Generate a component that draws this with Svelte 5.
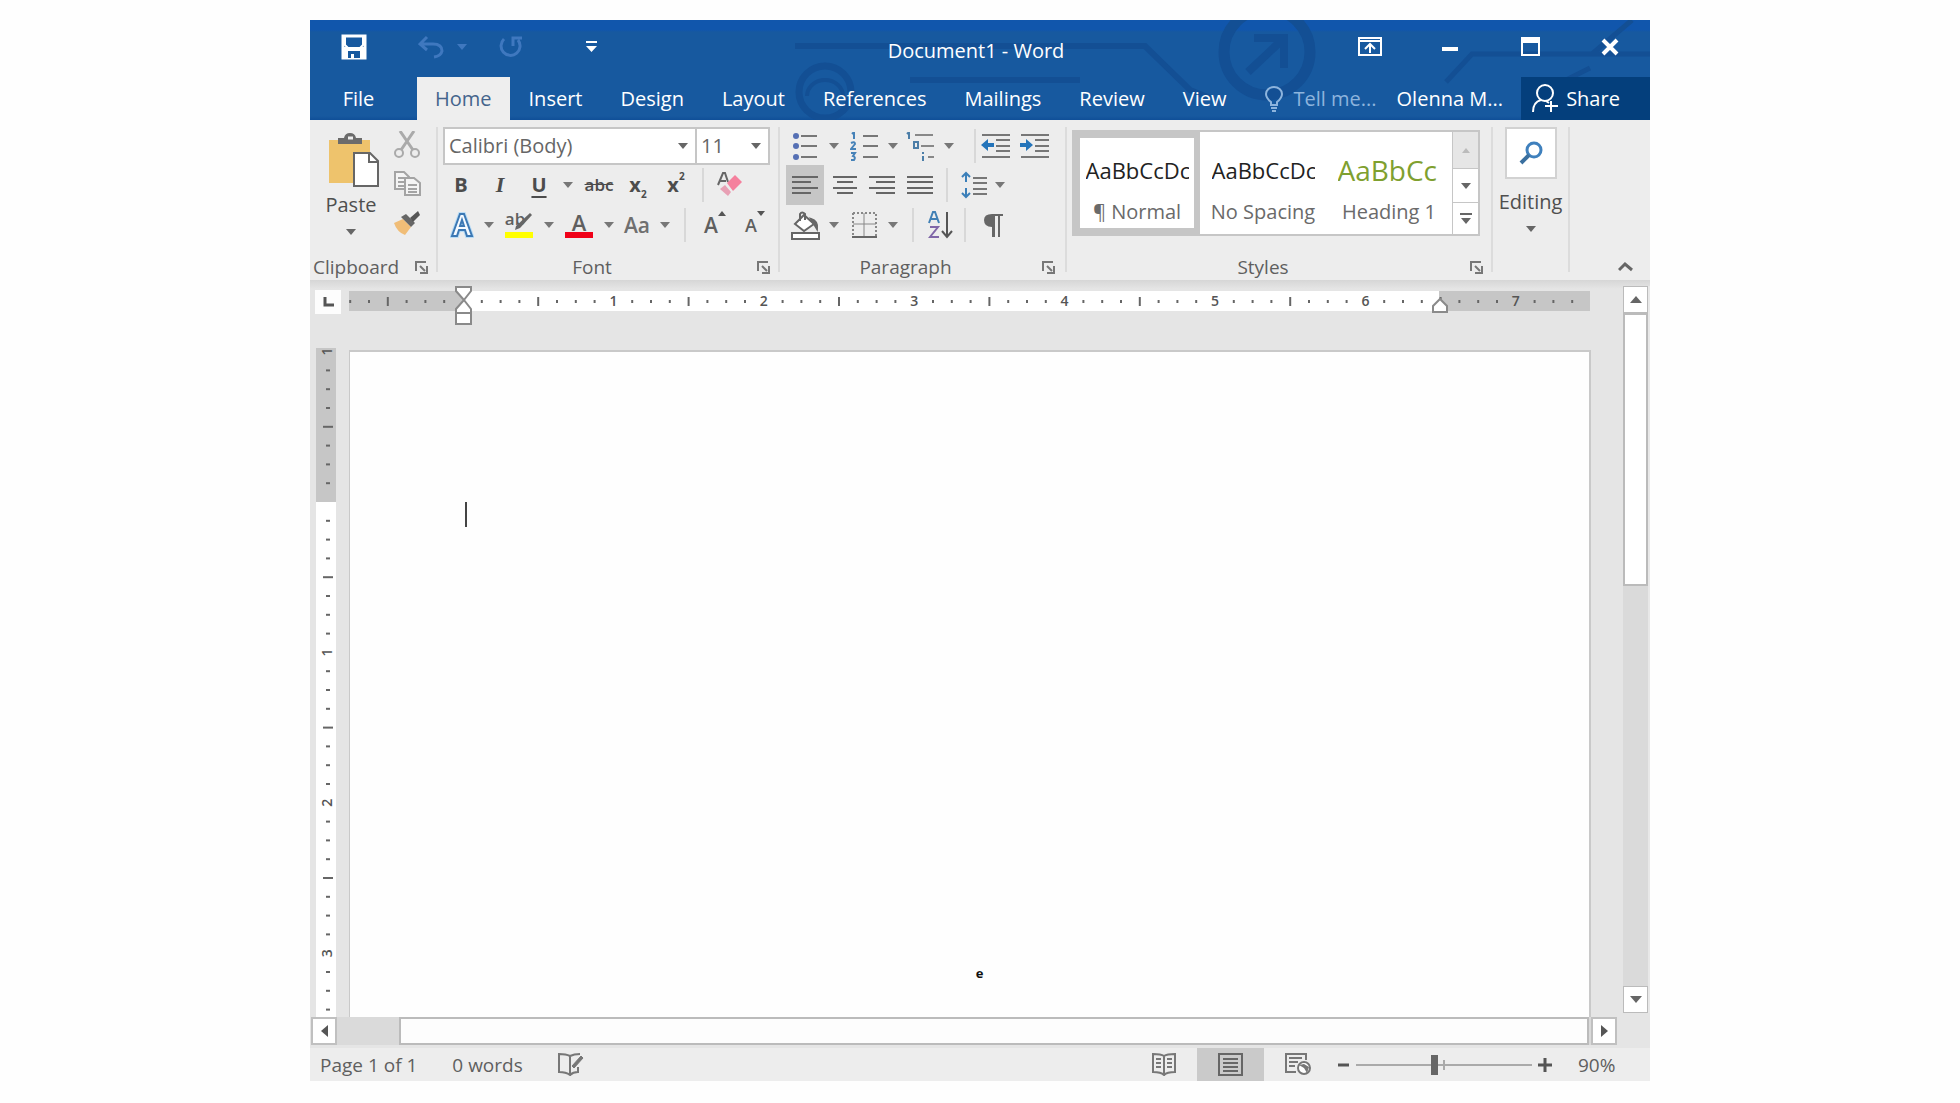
<script>
  const tabs = ['Home', 'Insert', 'Design', 'Layout', 'References', 'Mailings', 'Review', 'View'];
  let activeTab = $state('Home');
  let zoom = $state(90);

  // Ruler marks: eight divisions to the inch, measured from the margin.
  const STEP = 18.8;
  function marks(from, to, origin) {
    const list = [];
    for (let i = from; i <= to; i++) {
      const kind = i % 8 === 0 ? 'number' : i % 4 === 0 ? 'half' : 'dot';
      list.push({ at: origin + i * STEP, kind, label: Math.abs(i / 8) });
    }
    return list.filter((m) => m.label !== 0);
  }
  const across = marks(-6, 59, 114);
  const down = marks(-8, 27, 154);
</script>

{#snippet caret()}
  <svg class="caret" width="10" height="6" viewBox="0 0 10 6" aria-hidden="true"><path d="M0 0H10L5 6Z" fill="currentColor" /></svg>
{/snippet}

{#snippet launcher(name)}
  <button class="launcher" aria-label={name}>
    <svg width="13" height="13" viewBox="0 0 13 13" fill="none" stroke="#777" stroke-width="2"><path d="M1 10V1H11M5 5L10 10M12 5V12H5" /></svg>
  </button>
{/snippet}

{#snippet menu(name)}
  <button class="drop" aria-label={name}>{@render caret()}</button>
{/snippet}

<main class="window">
  <header>
    <svg class="circuit" viewBox="0 0 1340 100" preserveAspectRatio="xMaxYMin slice" fill="none" stroke="#134f94" stroke-width="6" aria-hidden="true">
      <path d="M485 26H835L880 70L900 78" />
      <path d="M600 60H770" />
      <circle cx="515" cy="72" r="26" stroke-width="7" />
      <path d="M497 76A18 16 0 0 1 533 76" stroke-width="4" />
      <circle cx="957" cy="32" r="43" stroke-width="11" />
      <path d="M938 52L972 20M944 18H974V48" stroke-width="8" />
      <path d="M1136 62L1162 34H1340M1282 34L1322 0M1256 60L1280 48" stroke-width="5" />
    </svg>
    <div class="titlebar">
      <div class="quick">
        <button class="save" aria-label="Save">
          <svg width="26" height="26" viewBox="0 0 26 26"><path d="M2 2H24V24H2Z" fill="none" stroke="#fff" stroke-width="3" /><path d="M4 3V11L7 14H19L22 11V3" stroke="#fff" stroke-width="2" fill="none" /><path d="M3 13H23V24H3Z" fill="#fff" /><path d="M7 17H19V24H13V20H10V24H7Z" fill="#17599f" /></svg>
        </button>
        <button class="undo" aria-label="Undo">
          <svg width="26" height="24" viewBox="0 0 26 24" fill="none" stroke="#3f78bf" stroke-width="3"><path d="M9 2L2 9L9 15M3 9H15Q24 9 24 16Q23 21 16 22" /></svg>
        </button>
        <button class="faint" aria-label="Undo list">{@render caret()}</button>
        <button class="redo" aria-label="Repeat">
          <svg width="24" height="24" viewBox="0 0 24 24" fill="none" stroke="#3f78bf" stroke-width="3"><path d="M5 4A9.5 9.5 0 1 0 19 5M14 11V3H23" /></svg>
        </button>
        <button class="customize" aria-label="Customize Quick Access Toolbar">
          <svg width="11" height="12" viewBox="0 0 11 12" fill="#fff"><path d="M0 0H11V2H0ZM0 5H11L5.500 11Z" /></svg>
        </button>
      </div>
      <h1>Document1 - Word</h1>
      <div class="controls">
        <button aria-label="Ribbon Display Options">
          <svg width="24" height="19" viewBox="0 0 24 19" fill="none" stroke="#fff" stroke-width="2"><path d="M1 1H23V18H1ZM1 4H23M12 16V8M7 12L12 7L17 12" /></svg>
        </button>
        <button aria-label="Minimize"><svg width="16" height="19" viewBox="0 0 16 19"><path d="M0 10H16V14H0Z" fill="#fff" /></svg></button>
        <button aria-label="Maximize"><svg width="19" height="19" viewBox="0 0 19 19"><path d="M1 1H18V18H1Z" fill="none" stroke="#fff" stroke-width="2" /><path d="M0 0H19V6H0Z" fill="#fff" /></svg></button>
        <button aria-label="Close"><svg width="18" height="18" viewBox="0 0 18 18"><path d="M2 2L16 16M16 2L2 16" stroke="#fff" stroke-width="4" /></svg></button>
      </div>
    </div>
    <nav>
      <button class="file">File</button>
      {#each tabs as tab}
        <button class="tab" class:active={tab === activeTab} onclick={() => (activeTab = tab)}>{tab}</button>
      {/each}
      <button class="tellme">
        <svg width="18" height="26" viewBox="0 0 18 26" fill="none" stroke="#8db4dd" stroke-width="2"><path d="M6 19V16Q1 12 1 8A8 7 0 0 1 17 8Q17 12 12 16V19ZM6 22H12M7 25H11" /></svg>
        Tell me...
      </button>
      <button class="user">Olenna M...</button>
      <button class="share">
        <svg width="27" height="29" viewBox="0 0 27 29" fill="none" stroke="#fff" stroke-width="2"><circle cx="14" cy="9" r="8" /><path d="M2 28Q2 18 10 16M15 17L18 19M20 17V28M14 22H27" /></svg>
        Share
      </button>
    </nav>
  </header>

  <section class="ribbon" aria-label="Home ribbon">
    <div class="group clipboard">
      <div class="clip-body">
        <button class="paste">
          <svg width="52" height="54" viewBox="0 0 52 54"><path d="M1 7H42V50H1Z" fill="#eec36c" /><path d="M10 11V5H16Q17 0 22 0Q27 0 28 5H34V11Z" fill="#6b6b6b" /><path d="M20 5H25" stroke="#eee" stroke-width="3" /><path d="M26 20H42L50 28V53H26Z" fill="#fff" stroke="#666" stroke-width="2" /><path d="M41 20V29H50" fill="none" stroke="#666" stroke-width="2" /></svg>
          <span>Paste</span>
          {@render caret()}
        </button>
        <div class="clip-tools">
          <button aria-label="Cut"><svg width="26" height="28" viewBox="0 0 26 28" fill="none" stroke="#aaa" stroke-width="2"><path d="M6 0L19 19M20 0L7 19" stroke-width="3" /><circle cx="5" cy="22" r="4" /><circle cx="21" cy="22" r="4" /></svg></button>
          <button aria-label="Copy"><svg width="27" height="25" viewBox="0 0 27 25" fill="#f4f4f4" stroke="#a4a4a4" stroke-width="2"><path d="M1 1H10L15 6V18H1ZM4 7H11M4 11H11M4 15H11" /><path d="M11 7H20L26 12V24H11ZM14 14H23M14 18H23M14 21H23" /></svg></button>
          <button aria-label="Format Painter"><svg width="28" height="26" viewBox="0 0 28 26"><path d="M1 13L10 9L18 17L12 25Q4 22 1 13Z" fill="#f0bd77" /><path d="M8 7L13 4L22 13L18 17Z" fill="#666" /><path d="M17 8L25 1L27 5L20 12Z" fill="#555" /></svg></button>
        </div>
      </div>
      <footer><span>Clipboard</span>{@render launcher('Clipboard settings')}</footer>
    </div>

    <div class="group font">
      <div class="combos">
        <label class="combo family"><select aria-label="Font"><option>Calibri (Body)</option></select>{@render caret()}</label>
        <label class="combo size"><select aria-label="Font size"><option>11</option></select>{@render caret()}</label>
      </div>
      <div class="row font-a">
        <button class="bold">B</button>
        <button class="italic">I</button>
        <button class="underline">U</button>
        {@render menu('Underline style')}
        <button class="strike">abc</button>
        <button class="script">x<sub>2</sub></button>
        <button class="script">x<sup>2</sup></button>
        <i class="rule"></i>
        <button aria-label="Clear formatting"><svg width="26" height="26" viewBox="0 0 26 26"><path d="M1 13L6 1H8L11 10M3 9H9" fill="none" stroke="#666" stroke-width="2" /><path d="M10 11L18 3L25 10L16 19Z" fill="#f5809d" /><path d="M8 13L14 20L11 24L3 17Z" fill="#e8a0b4" /></svg></button>
      </div>
      <div class="row font-b">
        <button aria-label="Text effects"><svg width="24" height="26" viewBox="0 0 24 26" fill="none"><path d="M2 24L10 2H14L22 24H17L15 18H9L7 24ZM10 14H14L12 8Z" stroke="#b9dcf5" stroke-width="4" /><path d="M2 24L10 2H14L22 24H17L15 18H9L7 24ZM10 14H14L12 8Z" fill="#f5faff" stroke="#3c78b4" stroke-width="2" /></svg></button>
        {@render menu('Text effect options')}
        <button class="highlight" aria-label="Text highlight colour"><span>ab</span><svg width="28" height="28" viewBox="0 0 28 28"><path d="M25 2L27 4L15 17L10 19L11 15Z" fill="#666" /><path d="M0 21H28V27H0Z" fill="#ff0" /></svg></button>
        {@render menu('Highlight colours')}
        <button class="colour" aria-label="Font colour">A</button>
        {@render menu('Font colours')}
        <button class="case">Aa</button>
        {@render menu('Change case')}
        <i class="rule"></i>
        <button class="grow" aria-label="Grow font">A<svg width="8" height="5" viewBox="0 0 8 5"><path d="M4 0L8 5H0Z" fill="#555" /></svg></button>
        <button class="grow" aria-label="Shrink font"><small>A</small><svg width="8" height="5" viewBox="0 0 8 5"><path d="M0 0H8L4 5Z" fill="#555" /></svg></button>
      </div>
      <footer><span>Font</span>{@render launcher('Font settings')}</footer>
    </div>

    <div class="group paragraph">
      <div class="row para-a">
        <button aria-label="Bullets"><svg width="24" height="27" viewBox="0 0 24 27"><path d="M8 3H24M8 13H24M8 24H24" stroke="#777" stroke-width="2" /><g fill="#5570b4"><circle cx="3" cy="3" r="3" /><circle cx="3" cy="13" r="3" /><circle cx="3" cy="24" r="3" /></g></svg></button>
        {@render menu('Bullet library')}
        <button aria-label="Numbering"><svg width="28" height="29" viewBox="0 0 28 29"><path d="M13 4H28M13 14H28M13 25H28" stroke="#777" stroke-width="2" /><path d="M2 2L4 0V7M1 11Q5 9 5 12L1 17H6M1 21H5L3 24Q6 25 4 28H1" fill="none" stroke="#4682b8" stroke-width="2" /></svg></button>
        {@render menu('Numbering library')}
        <button aria-label="Multilevel list"><svg width="30" height="29" viewBox="0 0 30 29"><path d="M9 3H27M15 14H28M22 25H28" stroke="#888" stroke-width="2" /><path d="M1 2L3 0V7M8 10H12V16H8ZM17 20V22M17 24V29" fill="none" stroke="#4c7ea8" stroke-width="2" /></svg></button>
        {@render menu('Multilevel lists')}
        <i class="rule"></i>
        <button aria-label="Decrease indent"><svg width="29" height="26" viewBox="0 0 29 26"><path d="M1 2H29M15 7H29M15 13H29M15 18H29M1 24H29" stroke="#777" stroke-width="2" /><path d="M7 6V10H13V14H7V18L0 12Z" fill="#2474ba" /></svg></button>
        <button aria-label="Increase indent"><svg width="29" height="26" viewBox="0 0 29 26"><path d="M1 2H29M15 7H29M15 13H29M15 18H29M1 24H29" stroke="#777" stroke-width="2" /><path d="M6 6V10H0V14H6V18L13 12Z" fill="#2474ba" /></svg></button>
      </div>
      <div class="row para-b">
        <button class="pressed" aria-label="Align left"><svg width="26" height="20" viewBox="0 0 26 20"><path d="M0 2H26M0 7H19M0 13H26M0 18H19" stroke="#666" stroke-width="2" /></svg></button>
        <button aria-label="Centre"><svg width="24" height="20" viewBox="0 0 24 20"><path d="M0 2H24M4 7H20M0 13H24M4 18H20" stroke="#666" stroke-width="2" /></svg></button>
        <button aria-label="Align right"><svg width="26" height="20" viewBox="0 0 26 20"><path d="M0 2H26M7 7H26M0 13H26M7 18H26" stroke="#666" stroke-width="2" /></svg></button>
        <button aria-label="Justify"><svg width="26" height="20" viewBox="0 0 26 20"><path d="M0 2H26M0 7H26M0 13H26M0 18H26" stroke="#666" stroke-width="2" /></svg></button>
        <i class="rule"></i>
        <button aria-label="Line spacing"><svg width="26" height="28" viewBox="0 0 26 28"><path d="M12 7H26M12 12H26M12 18H26M12 23H26" stroke="#777" stroke-width="2" /><path d="M5 2V11M1 6L5 2L9 6M5 17V26M1 22L5 26L9 22" fill="none" stroke="#3b7fb9" stroke-width="2" /></svg></button>
        {@render menu('Line spacing options')}
      </div>
      <div class="row para-c">
        <button aria-label="Shading"><svg width="29" height="29" viewBox="0 0 29 29" fill="none" stroke="#666" stroke-width="2"><path d="M13 4L23 13L13 20L4 13Z" fill="#fff" /><path d="M9 10V3Q11 0 14 3V9" /><path d="M20 8Q27 10 26 18L23 13Z" fill="#666" /><path d="M1 22H28V28H1Z" fill="#fff" /></svg></button>
        {@render menu('Shading colours')}
        <button aria-label="Borders"><svg width="25" height="27" viewBox="0 0 25 27" fill="none" stroke="#888" stroke-width="2"><path d="M1 1H24V24M1 1V24" stroke-dasharray="2 2" /><path d="M12 1V24M1 12H24" stroke-width="1" /><path d="M0 25H25" stroke="#666" /></svg></button>
        {@render menu('Border styles')}
        <i class="rule"></i>
        <button aria-label="Sort"><svg width="25" height="28" viewBox="0 0 25 28" fill="none" stroke-width="2"><path d="M1 12L5 1H7L11 12M3 8H9" stroke="#4180b5" /><path d="M2 16H10L2 26H11" stroke="#8067a8" /><path d="M19 1V26M14 20L19 26L24 20" stroke="#555" /></svg></button>
        <i class="rule"></i>
        <button aria-label="Show paragraph marks"><svg width="20" height="24" viewBox="0 0 20 24"><path d="M9 1H20V3H17V24H15V3H12V24H9V14Q1 14 1 7Q1 1 9 1Z" fill="#666" /></svg></button>
      </div>
      <footer><span>Paragraph</span>{@render launcher('Paragraph settings')}</footer>
    </div>

    <div class="group styles">
      <div class="gallery">
        <button class="style chosen"><span class="sample">AaBbCcDc</span><span class="name">¶ Normal</span></button>
        <button class="style"><span class="sample">AaBbCcDc</span><span class="name">No Spacing</span></button>
        <button class="style"><span class="sample heading">AaBbCc</span><span class="name">Heading 1</span></button>
        <div class="gallery-nav">
          <button disabled aria-label="Previous styles"><svg width="8" height="5" viewBox="0 0 8 5"><path d="M4 0L8 5H0Z" fill="#bbb" /></svg></button>
          <button aria-label="Next styles">{@render caret()}</button>
          <button aria-label="More styles"><svg width="12" height="12" viewBox="0 0 12 12" fill="#666"><path d="M0 0H12V2H0ZM1 5H11L6 11Z" /></svg></button>
        </div>
      </div>
      <footer><span>Styles</span>{@render launcher('Styles pane')}</footer>
    </div>

    <div class="group editing">
      <button>
        <span class="lens"><svg width="24" height="24" viewBox="0 0 24 24" fill="none"><circle cx="15" cy="9" r="7" fill="#fff" stroke="#3f80bd" stroke-width="3" /><path d="M10 14L2 22" stroke="#3a6f9f" stroke-width="4" /></svg></span>
        <span>Editing</span>
        {@render caret()}
      </button>
    </div>
    <button class="collapse" aria-label="Collapse the ribbon"><svg width="15" height="11" viewBox="0 0 15 11"><path d="M1 9L7 3L14 9" fill="none" stroke="#666" stroke-width="3" /></svg></button>
  </section>

  <section class="workspace" aria-label="Document area">
    <button class="tabstop" aria-label="Tab stop"><svg width="11" height="10" viewBox="0 0 11 10"><path d="M2 0V8H11" fill="none" stroke="#555" stroke-width="3" /></svg></button>
    <svg class="h-ruler" height="36" aria-label="Horizontal ruler">
      <rect width="100%" height="20" fill="#fff" />
      <rect width="114" height="20" fill="#c6c6c6" />
      <rect x="1090" width="151" height="20" fill="#c6c6c6" />
      {#each across as m}
        {#if m.kind === 'number'}
          <text x={m.at} y="15" text-anchor="middle">{m.label}</text>
        {:else if m.kind === 'half'}
          <path d="M{m.at} 6V15" />
        {:else}
          <path d="M{m.at} 9V12" />
        {/if}
      {/each}
      <g class="marker"><path d="M107 -4H122V0L115 9L122 18V33H107V18L115 9L107 0ZM107 22H122" /><path d="M1084 21V15L1091 8L1098 15V21Z" /></g>
    </svg>
    <svg class="v-ruler" width="20" aria-label="Vertical ruler">
      <rect width="20" height="100%" fill="#fff" />
      <rect width="20" height="154" fill="#c6c6c6" />
      {#each down as m}
        {#if m.kind === 'number'}
          <text transform="translate(16 {m.at}) rotate(-90)" text-anchor="middle">{m.label}</text>
        {:else if m.kind === 'half'}
          <path d="M7 {m.at}H17" />
        {:else}
          <path d="M10 {m.at}H14" />
        {/if}
      {/each}
    </svg>
    <article class="page">
      <i class="cursor"></i>
      <p>e</p>
    </article>
    <div class="v-scroll">
      <button aria-label="Scroll up"><svg width="12" height="7" viewBox="0 0 12 7"><path d="M6 0L12 7H0Z" fill="#666" /></svg></button>
      <div class="v-thumb"></div>
      <button class="end" aria-label="Scroll down"><svg width="12" height="7" viewBox="0 0 12 7"><path d="M0 0H12L6 7Z" fill="#666" /></svg></button>
    </div>
    <div class="h-scroll">
      <button aria-label="Scroll left"><svg width="7" height="12" viewBox="0 0 7 12"><path d="M7 0V12L0 6Z" fill="#555" /></svg></button>
      <div class="h-thumb"></div>
      <button aria-label="Scroll right"><svg width="7" height="12" viewBox="0 0 7 12"><path d="M0 0V12L7 6Z" fill="#555" /></svg></button>
    </div>
  </section>

  <footer class="status">
    <span class="pages">Page 1 of 1</span>
    <span class="words">0 words</span>
    <button aria-label="Proofing"><svg width="26" height="23" viewBox="0 0 26 23" fill="none" stroke="#777" stroke-width="2"><path d="M12 22V3Q8 1 1 1V19Q8 19 12 22ZM12 3Q16 1 22 1M12 22Q15 19 20 19V14" /><path d="M14 13L23 3L25 5L16 15Z" fill="#777" stroke-width="1" /></svg></button>
    <div class="views">
      <button aria-label="Read Mode"><svg width="24" height="23" viewBox="0 0 24 23" fill="none" stroke="#777" stroke-width="2"><path d="M12 22V3Q9 1 1 1V19Q9 19 12 22ZM12 3Q15 1 23 1V19Q15 19 12 22M4 6H9M4 10H9M4 14H9M15 6H20M15 10H20M15 14H20" /></svg></button>
      <button class="on" aria-label="Print Layout"><svg width="25" height="23" viewBox="0 0 25 23" fill="none" stroke="#666" stroke-width="2"><path d="M1 1H24V22H1ZM5 6H20M5 10H20M5 14H20M5 18H20" /></svg></button>
      <button aria-label="Web Layout"><svg width="26" height="23" viewBox="0 0 26 23" fill="none" stroke="#777" stroke-width="2"><path d="M11 19H1V1H21V7M4 5H17M4 9H13M4 13H10" /><circle cx="19" cy="15" r="6" fill="#fff" /><path d="M14 12L19 15L22 20L24 14L19 11Z" fill="#777" stroke="none" /></svg></button>
    </div>
    <button class="step" aria-label="Zoom out"><svg width="11" height="14" viewBox="0 0 11 14"><path d="M0 7H11" stroke="#555" stroke-width="3" /></svg></button>
    <input type="range" min="10" max="190" bind:value={zoom} aria-label="Zoom" />
    <button class="step" aria-label="Zoom in"><svg width="14" height="14" viewBox="0 0 14 14"><path d="M0 7H14M7 0V14" stroke="#555" stroke-width="3" /></svg></button>
    <span class="percent">{zoom}%</span>
  </footer>
</main>

<style>
  :global(body) { background: #fefefe; }
  * { box-sizing: border-box; }
  .window {
    display: flex;
    flex-direction: column;
    height: calc(100vh - 42px);
    min-height: 760px;
    min-width: 1340px;
    margin: 20px 310px 22px;
    color: #5f5f5f;
    background: #e5e5e5;
    font: 20px/28px "Open Sans", "Noto Sans", sans-serif;
  }
  button {
    display: flex;
    align-items: center;
    justify-content: center;
    padding: 0;
    border: 0;
    background: none;
    color: inherit;
    font: inherit;
    white-space: nowrap;
  }
  svg { display: block; flex: none; }

  header {
    position: relative;
    flex: none;
    color: #fff;
    background: linear-gradient(#1156ac 10px, #17599f 12px, #17599f 96px, #0f4f98);
  }
  .circuit { position: absolute; inset: 0; width: 100%; height: 100%; }
  .titlebar {
    position: relative;
    display: grid;
    grid-template-columns: 1fr auto 1fr;
    height: 57px;
    padding-bottom: 2px;
  }
  .quick, .controls { display: flex; align-items: stretch; }
  .quick { color: #3f78bf; padding-bottom: 2px; }
  .save { width: 88px; }
  .undo { width: 50px; margin-left: 8px; }
  .faint { width: 12px; }
  .redo { width: 50px; margin-left: 18px; }
  .customize { width: 50px; margin-left: 30px; }
  h1 { margin: 0; padding: 17px 8px 0 0; font: inherit; line-height: 28px; }
  .controls { justify-content: flex-end; padding-bottom: 2px; }
  .controls button { width: 80px; }
  nav { position: relative; display: flex; height: 43px; }
  .file { width: 97px; margin-right: 10px; }
  .tab { padding: 0 19px; }
  .tab.active { padding: 0 18px; color: #44648c; background: #eee; }
  .tellme { gap: 10px; margin-left: 20px; color: #8db4dd; }
  .user { margin: 0 18px 0 auto; }
  .share { width: 129px; gap: 8px; padding-right: 20px; background: #043f7c; }

  .ribbon { display: flex; flex: none; height: 160px; padding-top: 7px; background: #ededed; }
  .group { position: relative; display: flex; flex-direction: column; flex: none; padding-bottom: 1px; }
  .group::after {
    content: "";
    position: absolute;
    top: 0;
    right: 0;
    bottom: 8px;
    width: 2px;
    background: #dcdcdc;
  }
  .group footer { display: flex; align-items: center; margin-top: auto; padding-right: 10px; font-size: 19px; line-height: 24px; }
  .group footer span { flex: 1; text-align: center; }
  .launcher { width: 24px; height: 24px; justify-content: flex-end; }
  .clipboard { width: 128px; }
  .clipboard footer { padding-left: 3px; }
  .clipboard footer span { text-align: left; }
  .font { width: 342px; }
  .paragraph { width: 287px; }
  .paragraph footer { padding-right: 12px; }
  .styles { width: 426px; }
  .editing { width: 77px; }

  .clip-body { display: flex; height: 116px; }
  .paste { flex-direction: column; justify-content: flex-start; width: 82px; padding: 6px 0 0; color: #4f4f4f; }
  .paste svg:first-child { margin-left: 6px; }
  .paste span { line-height: 36px; }
  .paste .caret, .editing .caret { margin-top: 6px; color: #666; }
  .clip-tools { display: grid; grid-template-rows: 36px 40px 40px; width: 30px; }

  .combos { display: flex; height: 38px; padding-left: 5px; }
  .combo { display: flex; align-items: center; padding-right: 7px; border: 2px solid #c6c6c6; background: #fff; }
  .combo select {
    flex: 1;
    min-width: 0;
    padding: 0 0 0 4px;
    border: 0;
    appearance: none;
    background: none;
    color: #666;
    font: inherit;
  }
  .combo + .combo { margin-left: -2px; }
  .combo .caret { color: #666; }
  .family { width: 254px; }
  .size { width: 75px; }

  .row { display: grid; height: 40px; align-items: center; justify-items: stretch; }
  .drop { color: #777; }
  .rule { width: 2px; height: 34px; background: #d8d8d8; justify-self: center; }
  .font-a { grid-template-columns: 42px 36px 42px 16px 46px 32px 44px 10px 44px; padding-left: 2px; color: #4c4c4c; }
  .font-b { grid-template-columns: 44px 10px 50px 10px 50px 10px 46px 10px 30px 30px 50px; padding-left: 2px; }
  .para-a, .para-b, .para-c { padding-left: 2px; }
  .para-a { grid-template-columns: 46px 12px 48px 10px 46px 10px 22px 38px 40px; height: 38px; }
  .para-a .rule { justify-self: end; }
  .para-b { grid-template-columns: 46px 34px 40px 36px 18px 36px 16px; }
  .para-c { grid-template-columns: 46px 12px 48px 10px 30px 24px 26px 30px; }
  .bold { font-weight: 700; }
  .italic { font-family: "Liberation Serif", serif; font-style: italic; font-weight: 700; font-size: 22px; }
  .underline { font-weight: 700; text-decoration: underline; text-underline-offset: 4px; text-decoration-thickness: 2px; }
  .strike { font-size: 17px; font-weight: 600; text-decoration: line-through; }
  .script { font-weight: 700; }
  .script sub, .script sup { font-size: 10px; line-height: 10px; }
  .script sub { align-self: flex-end; }
  .script sup { align-self: flex-start; }
  .highlight { display: grid; }
  .highlight > * { grid-area: 1 / 1; justify-self: center; }
  .highlight span { padding: 0 8px 12px 0; font-size: 17px; font-weight: 600; line-height: 20px; }
  .colour { justify-self: center; width: 28px; border-bottom: 6px solid #f00018; font-size: 22px; font-weight: 600; line-height: 20px; }
  .case { font-size: 21px; font-weight: 600; color: #6f6f6f; }
  .grow { align-items: flex-start; font-size: 21px; font-weight: 600; }
  .grow small { font-size: 18px; }
  .pressed { width: 38px; height: 40px; background: #c6c6c6; justify-self: center; }

  .gallery { display: flex; width: 408px; height: 106px; margin: 3px 0 0 5px; border: 2px solid #c6c6c6; background: #fff; }
  .style { flex-direction: column; justify-content: flex-end; width: 126px; padding-bottom: 7px; }
  .chosen { padding-bottom: 1px; border: 6px solid #c6c6c6; }
  .sample { width: 103px; height: 38px; overflow: hidden; color: #222; font-size: 22px; line-height: 38px; text-align: left; }
  .heading { color: #7fa02f; font-size: 28px; font-weight: 400; }
  .name { margin-top: 8px; line-height: 30px; color: #6a6a6a; }
  .gallery-nav { display: grid; flex: 1; grid-template-rows: 36px 34px 32px; border-left: 1px solid #c6c6c6; color: #666; }
  .gallery-nav button + button { border-top: 1px solid #c6c6c6; }
  .gallery-nav button:disabled { background: #e6e6e6; }

  .editing button { flex-direction: column; padding-right: 2px; color: #4f4f4f; }
  .lens { display: grid; place-items: center; width: 52px; height: 52px; border: 2px solid #d2d2d2; background: #fff; }
  .editing button > span:nth-child(2) { margin-top: 9px; }
  .editing .caret { margin-top: 10px; }
  .collapse { align-self: flex-end; width: 50px; height: 28px; margin-left: auto; }

  .workspace {
    display: grid;
    flex: 1;
    min-height: 0;
    grid-template-columns: 39px minmax(0, 1fr) 33px 27px;
    grid-template-rows: 58px minmax(0, 1fr) 31px;
    padding-top: 10px;
    background: linear-gradient(#d6d6d6, #e5e5e5 9px);
  }
  .tabstop { width: 26px; height: 24px; margin-left: 5px; background: #fdfdfd; }
  .h-ruler { width: 100%; overflow: visible; margin-top: 1px; }
  .h-ruler text, .v-ruler text { fill: #555; font: 600 14px "Open Sans", sans-serif; }
  .h-ruler path, .v-ruler path { stroke: #666; stroke-width: 2; }
  .h-ruler .marker path { fill: #fff; stroke: #8a8a8a; }
  .v-ruler { grid-row: 2; grid-column: 1; height: 100%; margin-left: 6px; overflow: visible; }
  .page { position: relative; grid-row: 2; grid-column: 2 / 4; width: calc(100% - 32px); margin-top: 2px; border: 2px solid #c9c9c9; border-width: 2px 2px 0 1px; background: #fefefe; }
  .cursor { position: absolute; top: 150px; left: 115px; width: 2px; height: 25px; background: #444; }
  .page p { position: absolute; inset: auto 0 35px; margin: 0 0 0 20px; color: #111; font-size: 13px; font-weight: 700; line-height: 18px; text-align: center; }
  .v-scroll { grid-row: 1 / 3; grid-column: 4; display: flex; flex-direction: column; margin: -4px 0 4px; border-right: 2px solid #e8e8e8; background: #dadada; }
  .v-scroll button { flex: none; height: 27px; border: 1px solid #bbb; background: #fff; }
  .v-thumb { height: 273px; border: 2px solid #bbb; background: #fff; }
  .v-scroll .end { margin-top: auto; }
  .h-scroll { grid-row: 3; grid-column: 1 / 4; display: flex; height: 28px; margin: 0 6px 0 1px; background: #dadada; }
  .h-scroll button { flex: none; width: 26px; border: 2px solid #c0c0c0; background: #fff; }
  .h-thumb { flex: 1; margin: 0 2px 0 62px; border: 2px solid #bbb; background: #fdfdfd; }

  .status { display: flex; flex: none; align-items: center; height: 33px; padding: 0 0 0 10px; background: #ededed; font-size: 19px; line-height: 24px; }
  .words { margin: 0 35px; }
  .views { display: flex; align-self: stretch; margin: 0 5px 0 auto; }
  .views button { width: 67px; }
  .views .on { background: #cacaca; }
  .step { width: 14px; }
  input { width: 176px; height: 22px; margin: 0 6px; appearance: none; background: linear-gradient(#aaa, #aaa) center / 100% 2px no-repeat, linear-gradient(#aaa, #aaa) center / 2px 10px no-repeat; }
  input::-webkit-slider-thumb { width: 7px; height: 20px; appearance: none; background: #666; }
  .percent { width: 98px; padding-left: 26px; }
</style>
